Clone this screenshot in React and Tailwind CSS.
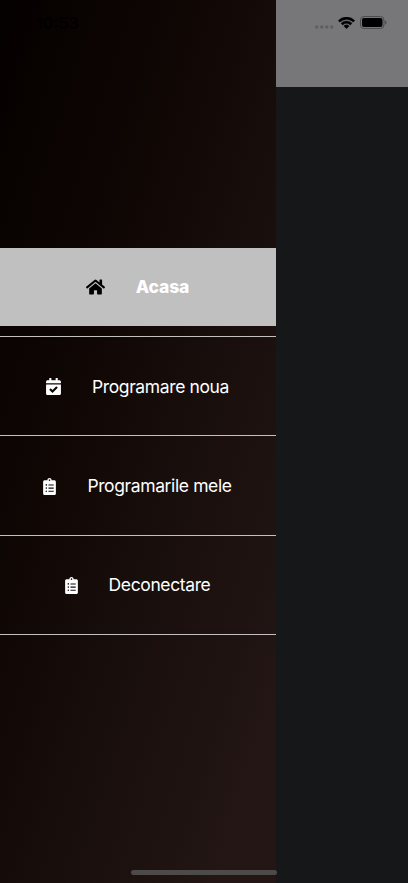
import { FaHome, FaCalendarCheck, FaClipboardList } from "react-icons/fa";

const menuItems = [
  { id: "home", label: "Acasa", icon: FaHome, iconClass: "w-[19px] h-[18px]" },
  { id: "new", label: "Programare noua", icon: FaCalendarCheck, iconClass: "w-[15px] h-[17px]" },
  { id: "mine", label: "Programarile mele", icon: FaClipboardList, iconClass: "w-[13px] h-[17px]" },
  { id: "logout", label: "Deconectare", icon: FaClipboardList, iconClass: "w-[13px] h-[17px]" },
];

function MenuItem({ item, active }) {
  const Icon = item.icon;

  return (
    <li className="border-b border-[#c4c0bf] py-[10px]">
      <a
        href="#"
        className={`flex h-[78.4px] items-center justify-center gap-[31px] pr-px ${active ? "bg-[#c0c0c0]" : "pt-px"}`}
      >
        <Icon className={`${item.iconClass} ${active ? "text-black" : "text-white"}`} />
        <span
          className={`text-[17.5px] text-white ${active ? "font-extrabold tracking-[-0.15px]" : "tracking-[-0.38px]"}`}
        >
          {item.label}
        </span>
      </a>
    </li>
  );
}

function StatusIcons() {
  return (
    <div className="flex items-center">
      <svg width="19" height="4" viewBox="0 0 19 4" className="mt-[8px]" fill="#5f5f61">
        <circle cx="1.8" cy="2" r="1.7" />
        <circle cx="6.8" cy="2" r="1.7" />
        <circle cx="11.8" cy="2" r="1.7" />
        <circle cx="16.8" cy="2" r="1.7" />
      </svg>
      <svg width="17" height="12" viewBox="0 0 17 12" className="ml-[4px]" fill="#000" stroke="#000" strokeWidth="0.3">
        <path d="M8.5 2.4c2.4 0 4.7.9 6.4 2.6.1.1.3.1.5 0l1.2-1.3c.1-.1.1-.4 0-.5a11.7 11.7 0 0 0-16.2 0c-.1.1-.1.4 0 .5L1.6 5c.2.1.4.1.5 0a9.3 9.3 0 0 1 6.4-2.6z" />
        <path d="M8.5 6.5c1.3 0 2.6.5 3.5 1.4.1.1.4.1.5 0l1.3-1.3c.1-.1.1-.4 0-.5a7.7 7.7 0 0 0-10.6 0c-.1.1-.1.4 0 .5l1.3 1.3c.1.1.4.1.5 0 .9-.9 2.2-1.4 3.5-1.4z" />
        <path d="M11 9.3c.1-.1.1-.4 0-.5a3.9 3.9 0 0 0-5 0c-.1.1-.1.4 0 .5l2.2 2.3c.2.2.4.2.6 0z" />
      </svg>
      <svg width="27" height="13" viewBox="0 0 27 13" className="ml-[5px]">
        <rect x="0.5" y="0.5" width="23.5" height="12" rx="3.5" fill="none" stroke="#4c4c4e" />
        <rect x="2" y="2" width="20.5" height="9" rx="2" fill="#000" />
        <path d="M25.2 4.5v4c.8-.3 1.3-1.1 1.3-2s-.5-1.7-1.3-2z" fill="#48484a" />
      </svg>
    </div>
  );
}

export default function App() {
  return (
    <div className="relative flex h-[883px] w-[408px] overflow-hidden bg-[#161719] font-['Inter',sans-serif]">
      {/* Drawer */}
      <nav className="flex w-[276px] shrink-0 flex-col bg-linear-to-br from-[#050100] via-[#150c0a] via-50% to-[#231614] to-90%">
        <div className="h-[237.6px] pt-[11px] pl-[36px]">
          <span className="text-base font-semibold text-black">10:53</span>
        </div>
        <ul>
          {menuItems.map((item) => (
            <MenuItem key={item.id} item={item} active={item.id === "home"} />
          ))}
        </ul>
      </nav>

      {/* Dimmed screen behind the drawer */}
      <main className="flex-1">
        <header className="flex h-[87px] justify-end bg-[#777779] pt-[16px] pr-[21px]">
          <div className="h-[13px]">
            <StatusIcons />
          </div>
        </header>
      </main>

      {/* Home indicator */}
      <div className="absolute bottom-[8px] left-[131px] h-[5px] w-[146px] rounded-full bg-[#4d4a4a]" />
    </div>
  );
}
